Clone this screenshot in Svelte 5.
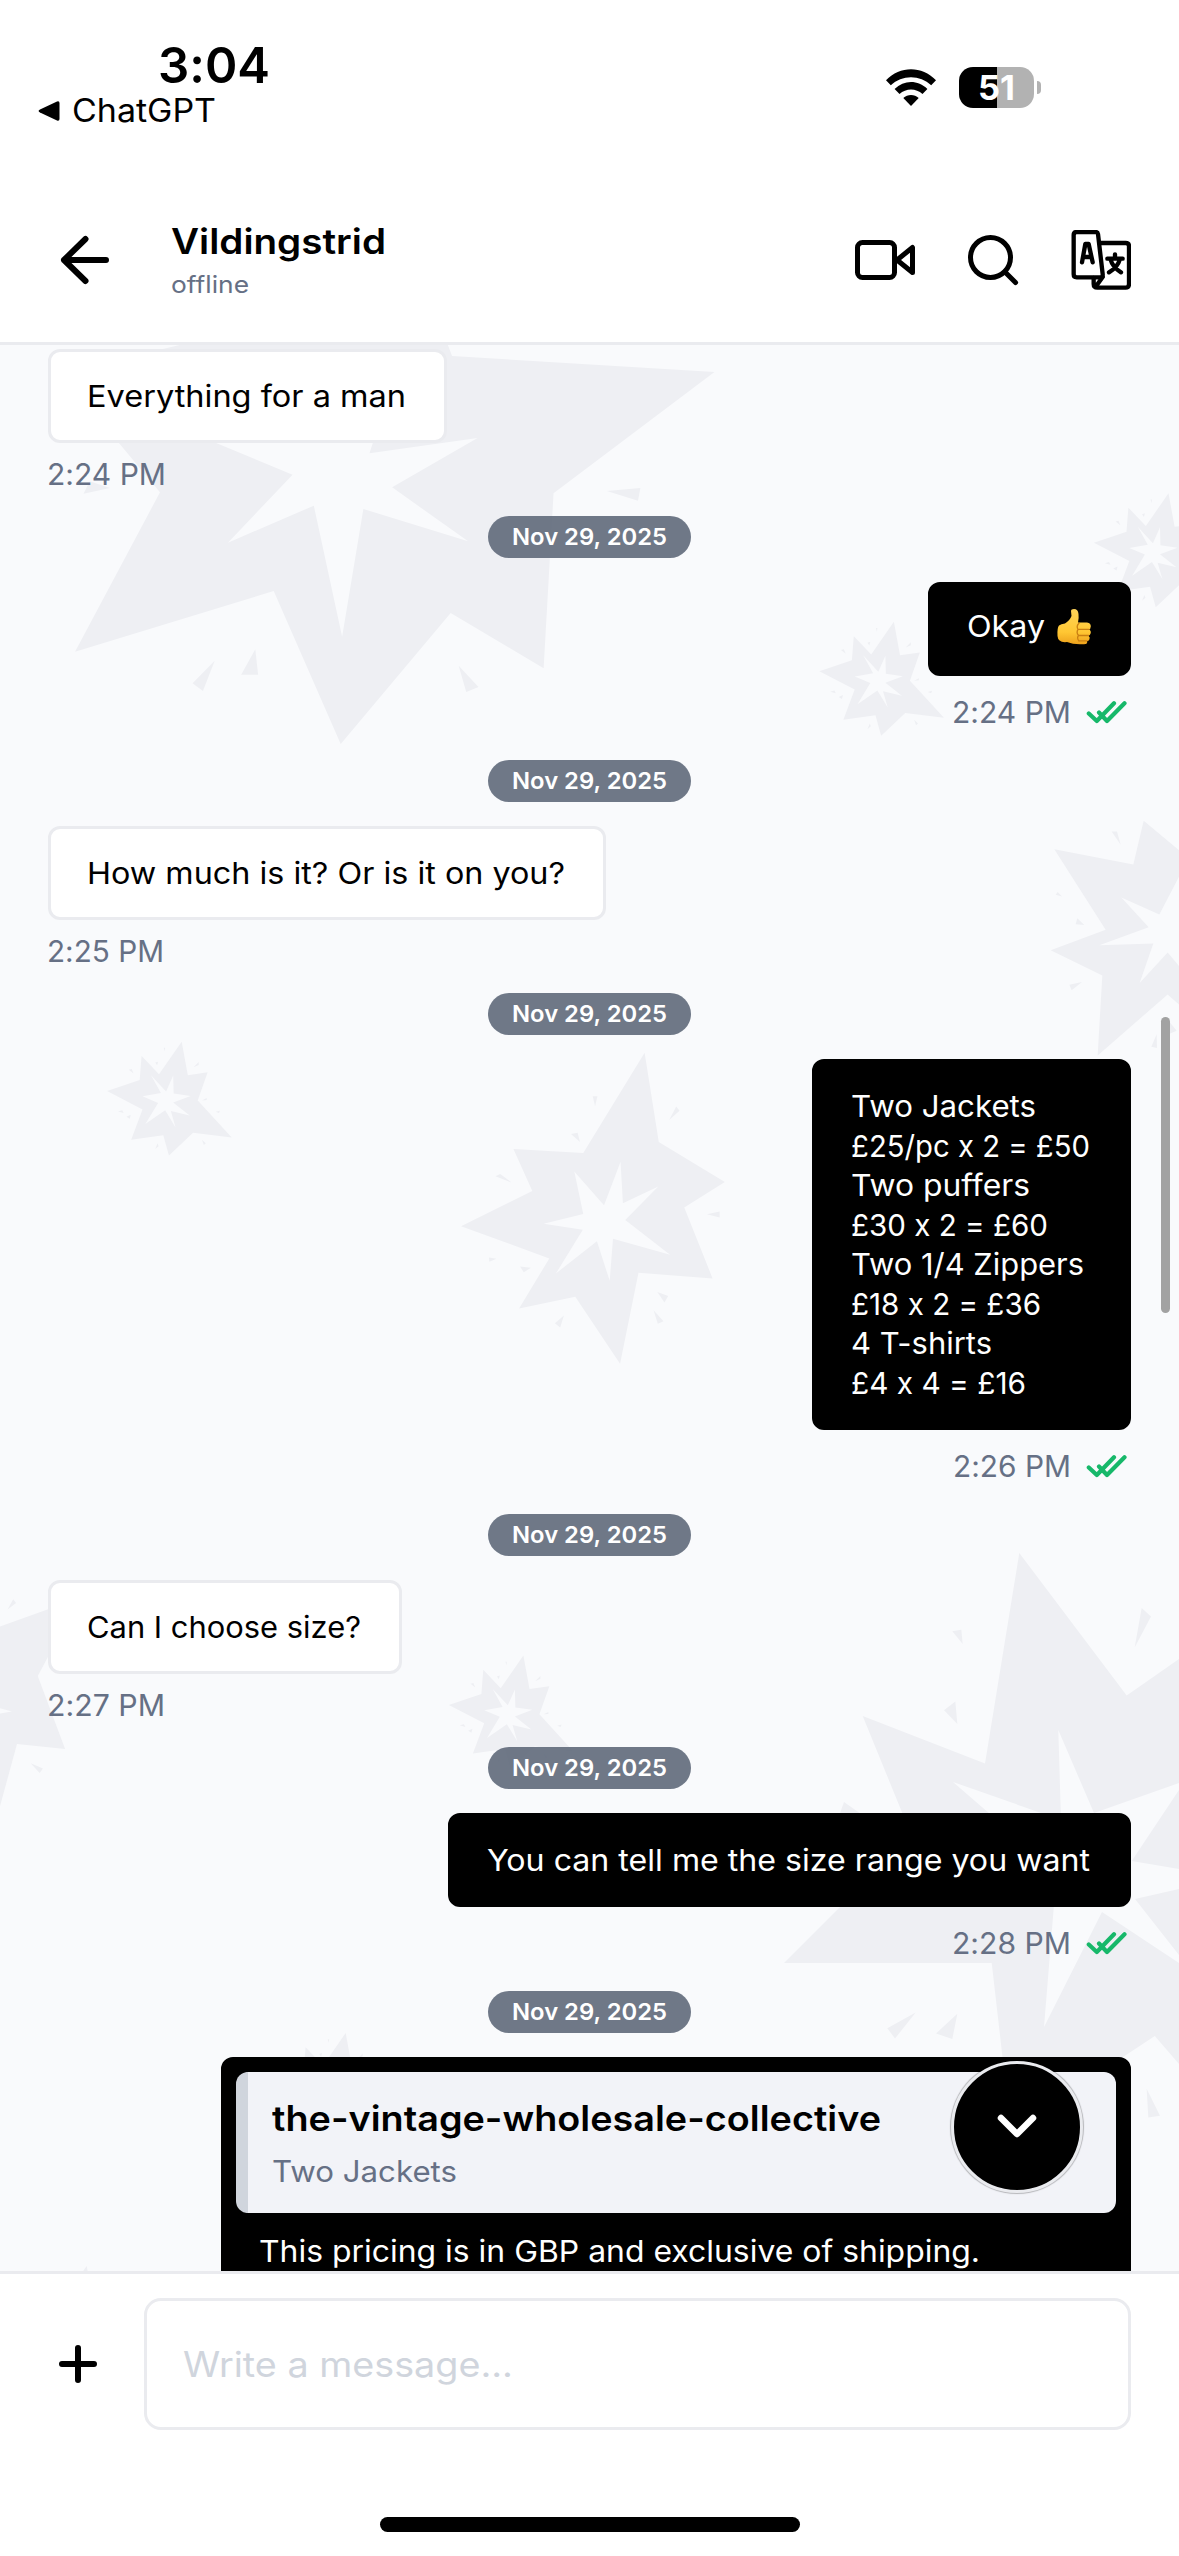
<script>
  const date = 'Nov 29, 2025';

  // Every line carries the width it is set to.
  const thread = [
    { mine: false, time: '2:24 PM', tw: 119, lines: [['Everything for a man', 319]] },
    { mine: true, time: '2:24 PM', tw: 119, thumb: true, lines: [['Okay', 78]] },
    { mine: false, time: '2:25 PM', tw: 117, lines: [['How much is it? Or is it on you?', 478]] },
    {
      mine: true, time: '2:26 PM', tw: 118,
      lines: [
        ['Two Jackets', 185], ['£25/pc x 2 = £50', 239], ['Two puffers', 179], ['£30 x 2 = £60', 197],
        ['Two 1/4 Zippers', 233], ['£18 x 2 = £36', 190], ['4 T-shirts', 141], ['£4 x 4 = £16', 175],
      ],
    },
    { mine: false, time: '2:27 PM', tw: 118, lines: [['Can I choose size?', 274]] },
    { mine: true, time: '2:28 PM', tw: 119, lines: [['You can tell me the size range you want', 603]] },
  ];

  // Widens the letterforms of a line so that it fills the given width.
  function fit(node, width) {
    const range = document.createRange();
    range.selectNodeContents(node);
    const natural = range.getBoundingClientRect().width;
    node.style.width = `${natural}px`;
    node.style.marginRight = `${width - natural}px`;
    node.style.transform = `scaleX(${width / natural})`;
  }

  const burst = [
    '227,811 296,784 300,725 337,770 385,690 398,772 440,765 419,834 491,925 409,913 358,969 346,919 278,930 302,856',
    '273,759 279,757 283,768', '421,740 421,747 410,753', '329,741 335,739 333,748', '250,861 259,858 262,865',
    '268,874 277,869 275,879', '428,834 438,828 438,833', '334,939 336,946 329,953', '428,930 436,939 432,943',
    '457,862 466,859 464,865', '347,705 350,705 349,714',
  ];
  const burstCore = '320,772 352,812 367,773 368,817 404,823 367,839 402,871 362,860 372,900 350,858 308,892 335,840 302,824 341,816';
  const burstSpots = [[0, 0], [712.2, -419.8], [986.8, -548.3], [341.7, 613.9], [164, 991.4], [-95, 1224.4]];
</script>

<div class="screen">
  <header>
    <div class="status">
      <div class="clock">
        <div class="time"><span use:fit={112}>3:04</span></div>
        <div class="back-app">
          <svg width="22" height="22" viewBox="0 0 22 22"><path d="M2 9.4 19 1.4Q21.5.6 21.5 3v16q0 2.400-2.500 1.600L2 12.600Q-.8 11 2 9.400Z" /></svg>
          <span use:fit={144}>ChatGPT</span>
        </div>
      </div>
      <div class="signals">
        <svg width="50" height="38" viewBox="0 0 50 38">
          <path d="M0 11.200C14-3.500 36-3.500 50 11.200L45.200 16.200C34 5.500 16 5.500 4.800 16.200Z" />
          <path d="M8.600 20C18 10.800 32 10.800 41.400 20L36.500 25C30 19 20 19 13.500 25Z" />
          <path d="M17.300 29C21.500 25 28.500 25 32.700 29L25 37Z" />
        </svg>
        <div class="battery"><span use:fit={37}>51</span></div>
        <i class="cap"></i>
      </div>
    </div>
    <div class="bar">
      <svg class="arrow" width="50" height="50" viewBox="0 0 50 50"><path d="M25.500 4 4 25 25.500 46M4 25H46" /></svg>
      <div class="who">
        <h1 use:fit={215}>Vildingstrid</h1>
        <p use:fit={78}>offline</p>
      </div>
      <div class="tools">
        <svg width="60" height="42" viewBox="0 0 60 42">
          <rect x="2.500" y="3.500" width="37" height="35" rx="5" />
          <path d="M42 21 57.500 8.500V33.500Z" />
        </svg>
        <svg width="52" height="52" viewBox="0 0 52 52">
          <circle cx="23.500" cy="23.500" r="20" />
          <path d="M38 38 48.500 48.500" />
        </svg>
        <svg class="translate" width="60" height="60" viewBox="33 30 180 180">
          <path d="M50 36H107Q113 36 114 42L128 162Q129 172 121 172H50Q41 172 41 163V45Q41 36 50 36Z" />
          <path d="M118 69H197Q207 69 207 79V192Q207 203 197 203H112Q101 203 101 192V174M128 171 107 200" />
          <path class="heavy" d="M66 127 76 72H86L98 127M71 111H93" />
          <path class="heavy" d="M165 103V115M142 116H188M151 117Q158 142 183 157M180 117Q173 142 147 157" />
        </svg>
      </div>
    </div>
  </header>

  <main>
    <svg class="pattern" width="1179" height="1926" viewBox="0 345 1179 1926">
      <g transform="translate(0 340) scale(.4719 .33333)">
        <polygon points="425,0 945,0 958,48 1514,96 1173,460 1152,985 955,819 722,1212 580,753 159,935 339,457 252,309 130,100" />
        <polygon points="177,461 233,444 190,424" /><polygon points="1286,453 1357,444 1352,482" />
        <polygon points="408,1030 455,962 430,1053" /><polygon points="511,1004 541,928 547,1004" />
        <polygon points="972,977 1014,1041 988,1056" />
        <polygon class="core" points="458,309 620,404 483,608 665,497 725,890 770,507 992,604 831,442 1012,294 783,340 790,309 800,150 650,240 400,150" />
      </g>
      {#each burstSpots as [x, y]}
        <g transform="translate({x} {y + 760}) scale(.4719 .4082)">
          {#each burst as points}<polygon {points} />{/each}
          <polygon class="core" points={burstCore} />
        </g>
      {/each}
      <g transform="translate(0 760) scale(.4719 .4082)">
        <polygon points="977,1142 1128,1056 1088,953 1236,963 1366,717 1396,936 1536,1034 1450,1096 1510,1270 1353,1256 1314,1479 1219,1315 1100,1344 1164,1221" />
        <polygon class="core" points="1217,1008 1280,1091 1315,984 1320,1086 1395,1045 1325,1127 1420,1212 1299,1173 1292,1276 1265,1179 1178,1258 1235,1151 1152,1136 1236,1112" />
        <polygon points="1256,824 1266,824 1261,848" /><polygon points="1433,849 1440,859 1418,882" />
        <polygon points="1210,916 1224,913 1229,936" /><polygon points="1050,1020 1060,1014 1084,1035" />
        <polygon points="1498,1113 1525,1106 1525,1121" /><polygon points="1036,1219 1052,1222 1037,1229" />
        <polygon points="1102,1241 1125,1244 1110,1255" /><polygon points="1393,1303 1416,1313 1408,1329" />
        <polygon points="1385,1348 1406,1375 1394,1381" /><polygon points="1195,1361 1176,1380 1187,1390" />
      </g>
      <g transform="translate(740 740) scale(.33333 .4592)">
        <polygon points="1317,240 1211,176 1180,271 943,238 1097,413 932,458 1087,513 1073,687 1283,554 1317,576" />
        <polygon class="core" points="1317,298 1258,380 1144,343 1226,408 1078,447 1240,443 1199,529 1283,463 1317,492" />
        <polygon points="1115,199 1131,199 1142,228" /><polygon points="947,337 953,331 966,341" />
        <polygon points="1007,401 1012,388 1033,403" /><polygon points="988,533 1026,527 995,545" />
        <polygon points="1234,668 1250,641 1251,671" /><polygon points="1290,615 1310,633 1287,640" />
      </g>
      <g transform="translate(0 1400) scale(.4719 .4082)">
        <polygon points="0,555 130,501 120,590 80,676 138,855 36,843 0,995" />
        <polygon class="core" points="0,755 25,763 0,768" />
        <polygon points="28,488 34,497 16,513" /><polygon points="65,890 91,903 84,914" />
      </g>
      <polygon points="1179,1659 1126.7,1695.6 1019.3,1553 985,1763.4 862.7,1716 902.3,1813 940,1860 840,1907 784,1963 991.7,1963 1002.500,2057 1010,2140 1123,2057 1154.8,2036 1179,2064" />
      <polygon class="core" points="1179,1783 1094,1813 1058.3,1730 1061,1820 953,1782 1020,1840 960,1880 1056,1880 1044,2027 1102,1912 1179,1963 1179,1955 1135,1899 1179,1889 1179,1869 1131.7,1861 1179,1790" />
      <g transform="translate(740 1440) scale(.33333 .3827)">
        <polygon points="637,500 664,496 668,533" /><polygon points="1205,439 1233,461 1184,542" />
        <polygon points="612,706 646,683 652,742" /><polygon points="312,946 360,975 300,975" />
        <polygon points="442,1537 527,1496 465,1564" /><polygon points="588,1551 652,1499 637,1565" />
        <polygon points="1220,1695 1260,1766 1225,1770" />
      </g>
    </svg>

    <div class="thread">
      {#each thread as m}
        <section class:mine={m.mine}>
          <div class="bubble" class:emoji={m.thumb}>
            <div class="copy">
              {#each m.lines as [text, w]}<p use:fit={w}>{text}</p>{/each}
            </div>
            {#if m.thumb}
              <svg class="thumb" width="36" height="38" viewBox="0 0 36 38" role="img" aria-label="thumbs up">
                <defs><linearGradient id="skin" x2="0" y2="1"><stop offset="0" stop-color="#ffd45a" /><stop offset=".65" stop-color="#ffc733" /><stop offset="1" stop-color="#eda11c" /></linearGradient></defs>
                <path fill="url(#skin)" d="M15 3Q15 1 18 1Q22 1 22.500 6Q23 10 22 14.500H31Q35 15 34.800 18.500Q34.600 21 33 21.500Q35.500 23 34.600 25.500Q34 27.500 32.500 27.800Q34.500 29.500 33.400 31.500Q32.600 33 31 33.200Q32 36 28 36.200Q18 37 11 34Q2 35 1.500 28Q1 20 3 17.500Q5 16 9 15.500Q14 12 15.500 8Z" />
                <path fill="none" stroke="#c97f13" stroke-width="1.300" stroke-linecap="round" d="M23 21.300H33M23 27.500H32.500M23 32.800H31M23 15.200Q20 18 22 21.300Q20 24.500 22.500 27.500Q20.500 30 23 33" />
              </svg>
            {/if}
          </div>
          <div class="meta">
            <span use:fit={m.tw}>{m.time}</span>
            {#if m.mine}
              <svg class="ticks" width="42" height="24" viewBox="0 0 42 24"><path d="M2.800 13.500 10.800 21 28 3.200M13 12.500 21 21 38.500 3.200" /></svg>
            {/if}
          </div>
        </section>
        <time><span use:fit={155}>{date}</span></time>
      {/each}
      <section class="mine">
        <div class="bubble reply">
          <blockquote>
            <h2 use:fit={609}>the-vintage-wholesale-collective</h2>
            <p use:fit={185}>Two Jackets</p>
          </blockquote>
          <p class="follow" use:fit={721}>This pricing is in GBP and exclusive of shipping.</p>
        </div>
      </section>
    </div>

    <i class="scrollbar"></i>
    <button class="jump" aria-label="Scroll to latest">
      <svg width="42" height="28" viewBox="0 0 42 28"><path d="M5 5 21 21 37 5" /></svg>
    </button>
  </main>

  <footer>
    <div class="compose">
      <svg class="plus" width="40" height="40" viewBox="0 0 40 40"><path d="M20 4V36M4 20H36" /></svg>
      <div class="field"><span use:fit={330}>Write a message...</span></div>
    </div>
    <i class="home"></i>
  </footer>
</div>

<style>
  :global(body) { background: #fff; }
  .screen {
    width: 1179px; height: 2556px; display: flex; flex-direction: column; overflow: hidden;
    background: #fff; color: #000; font-family: Inter, sans-serif; font-weight: 400; white-space: nowrap;
    font-feature-settings: "calt" 0;
  }
  h1, h2, p, blockquote { margin: 0; }
  h1, h2, p, span { transform-origin: 0 50%; }
  span { display: inline-block; }
  svg { display: block; flex: none; }
  i { display: block; }

  header { height: 345px; box-sizing: border-box; border-bottom: 3px solid #eaebef; flex: none; }
  .status { height: 178px; display: flex; align-items: flex-start; }
  .clock { width: 886px; padding-top: 35px; box-sizing: border-box; display: flex; flex-direction: column; }
  .time { padding-left: 158px; font-size: 50px; line-height: 60px; font-weight: 600; }
  .back-app { display: flex; align-items: center; gap: 12px; padding-left: 38px; font-size: 32px; line-height: 32px; }
  .signals { display: flex; align-items: center; padding-top: 67px; }
  .battery {
    width: 75px; height: 41px; margin-left: 23px; border-radius: 14px; text-align: center; color: #fff;
    background: linear-gradient(90deg, #000 50.500%, #b2b2b2 50.500%); font-size: 34px; line-height: 41px; font-weight: 700;
  }
  .cap { width: 4px; height: 13px; margin-left: 3px; background: #b2b2b2; border-radius: 0 5px 5px 0; }

  .bar { height: 164px; display: flex; align-items: center; padding: 0 48px 0 60px; }
  .bar svg, .jump svg, .plus, .ticks { fill: none; stroke: #000; stroke-linecap: round; stroke-linejoin: round; }
  .arrow { stroke-width: 6; }
  .who { flex: 1; padding: 0 0 1px 61px; }
  h1 { font-size: 35px; line-height: 44px; font-weight: 600; }
  .who p { font-size: 24px; line-height: 30px; margin-top: 7px; color: #667085; }
  .tools { display: flex; align-items: center; }
  .bar .tools svg { stroke-width: 5; }
  .tools svg:nth-child(2) { margin-left: 52px; }
  .bar .tools .translate { margin-left: 52px; stroke-width: 13; }

  main { position: relative; height: 1926px; overflow: hidden; background: #f9fafc; flex: none; }
  .pattern { position: absolute; inset: 0; fill: #eeeff3; }
  .core { fill: #f9fafc; }
  .thread { position: relative; display: flex; flex-direction: column; padding: 4px 48px 0; }
  section { display: flex; flex-direction: column; align-items: flex-start; padding-bottom: 73px; }
  section.mine { align-items: flex-end; padding-bottom: 84px; }
  .bubble {
    box-sizing: border-box; display: flex; gap: 11px; border: 3px solid #eaebef; border-radius: 12px; background: #fff;
    padding: 25.250px 38px 23.250px 36px; font-size: 30px; line-height: 39.500px;
  }
  .mine .bubble { background: #000; border-color: #000; color: #fff; }
  .emoji .copy { margin: -3px 0 3px; }
  .emoji.bubble { padding-right: 36px; }
  .thumb { margin: -2px 0 0; }
  .meta { display: flex; height: 42px; align-items: center; margin: 10px 0 -52px; color: #667085; font-size: 29.500px; line-height: 42px; }
  .meta span { margin-left: -1px; }
  .mine .meta { margin: 15px 3px -57px 0; }
  .ticks { margin-left: 15px; stroke: #17b86a; stroke-width: 4.200; }
  time {
    align-self: center; box-sizing: border-box; width: 203px; height: 42px; border-radius: 21px; margin-bottom: 24px;
    background: rgba(99, 109, 125, .92); color: #fff; text-align: center; font-size: 23.500px; line-height: 42px; font-weight: 600;
  }

  .mine .reply { width: 910px; height: 300px; display: block; padding: 12px; }
  blockquote {
    box-sizing: border-box; height: 141px; border-left: 12px solid #d0d5dd; border-radius: 12px;
    background: #f2f3f8; padding: 22px 23.500px;
  }
  h2 { color: #000; font-size: 35px; line-height: 48px; font-weight: 600; }
  blockquote p { color: #667085; margin-top: 9px; font-size: 29.500px; line-height: 40px; }
  .follow { margin: 19px 23px; }

  .scrollbar { position: absolute; left: 1161px; top: 672px; width: 9px; height: 296px; border-radius: 5px; background: #a2a2a2; }
  .jump {
    position: absolute; left: 951px; top: 1716px; width: 132px; height: 132px; box-sizing: border-box; padding: 0;
    display: grid; place-items: center; border: 3px solid #eaebef; border-radius: 50%; background: #000;
    box-shadow: 0 0 1px 1px rgba(0, 0, 0, .25);
  }
  .jump svg { stroke: #fff; stroke-width: 6.500; }

  footer { flex: 1; display: flex; flex-direction: column; border-top: 3px solid #eaebef; background: #fff; }
  .compose { display: flex; align-items: center; gap: 46px; padding: 24px 48px 0 58px; }
  .plus { stroke-width: 6; }
  .field {
    flex: 1; height: 132px; box-sizing: border-box; border: 3px solid #eaebef; border-radius: 17px;
    padding-left: 36px; color: #d0d5dd; font-size: 35px; line-height: 126px;
  }
  .home { width: 420px; height: 15px; border-radius: 8px; margin: 87px auto 0; background: #000; }
</style>
